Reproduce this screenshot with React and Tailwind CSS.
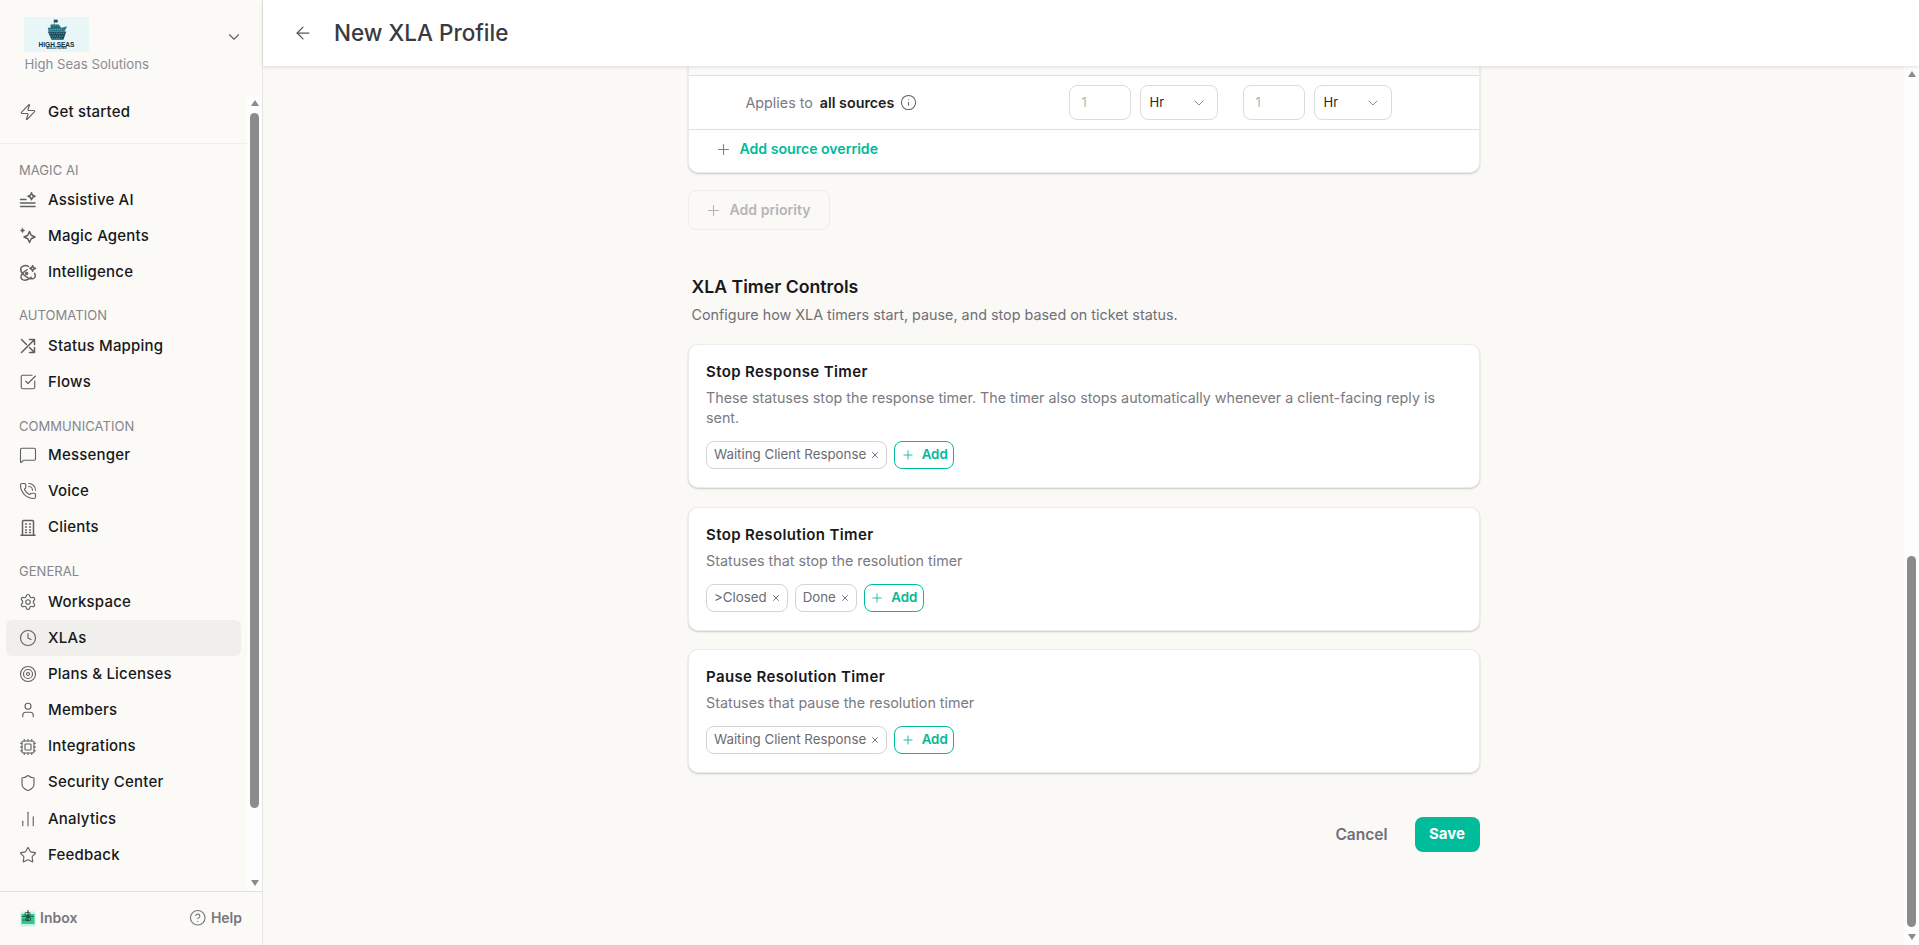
import React from "react";
import {
  Zap, SquareCheckBig, MessageSquare, PhoneCall, Settings, Clock, Target, User, Cpu, Shield,
  ChartNoAxesColumn, Star, CircleHelp, Plus, ChevronDown, ArrowLeft, Info, X,
} from "lucide-react";

const AssistiveIcon = (p) => (
  <svg viewBox="0 0 18 18" fill="none" stroke="currentColor" strokeWidth="1.2" strokeLinecap="round" strokeLinejoin="round" {...p}>
    <path d="M1.5 8.5h5.5M1.5 12h14.5M1.5 15.5h14.5" />
    <path d="M12.5 1.8l1.1 2.4 2.4 1.1-2.4 1.1-1.1 2.4-1.1-2.4-2.4-1.1 2.4-1.1z" />
  </svg>
);
const MagicIcon = (p) => (
  <svg viewBox="0 0 18 18" fill="none" stroke="currentColor" strokeWidth="1.2" strokeLinecap="round" strokeLinejoin="round" {...p}>
    <path d="M10.5 4.5l1.7 3.8 3.8 1.7-3.8 1.7-1.7 3.8-1.7-3.8L5 10l3.8-1.7z" />
    <path d="M3.5 1.2l.7 1.6 1.6.7-1.6.7-.7 1.6-.7-1.6-1.6-.7 1.6-.7z" fill="currentColor" strokeWidth="0.6" />
  </svg>
);
const IntelIcon = (p) => (
  <svg viewBox="0 0 18 18" fill="none" stroke="currentColor" strokeWidth="1.2" strokeLinecap="round" strokeLinejoin="round" {...p}>
    <path d="M9.5 2.4C7 1 3.5 1.4 2.2 3.6 1 5.8 2.4 8.6 5 11c2.8 2.5 6.6 4.4 9.2 3.6 2.2-.7 2.6-3 1.4-5.2" />
    <path d="M8 5.8C5.2 7.2 1.6 10.6 2 13.6c.4 2.4 3.4 3 6 2.2 1.6-.5 3-1.4 4.2-2.6" />
    <circle cx="7.6" cy="9.4" r="1" />
    <path d="M13.6 1.6l.9 1.9 1.9.9-1.9.9-.9 1.9-.9-1.9-1.9-.9 1.9-.9z" />
  </svg>
);
const CrossArrows = (p) => (
  <svg viewBox="0 0 18 18" fill="none" stroke="currentColor" strokeWidth="1.3" strokeLinecap="round" strokeLinejoin="round" {...p}>
    <path d="M2.5 2.500l5 5M10.500 10.500l5 5M2.500 15.500l13-13M10.500 2.500h5v5M15.500 10.500v5h-5" />
  </svg>
);
const BuildingIcon = (p) => (
  <svg viewBox="0 0 18 18" fill="none" stroke="currentColor" strokeWidth="1.2" strokeLinecap="round" strokeLinejoin="round" {...p}>
    <path d="M3.500 16V2.500a1 1 0 0 1 1-1h9a1 1 0 0 1 1 1V16M2 16.200h14" />
    <path d="M6.500 5h1M10.500 5h1M6.500 8h1M10.500 8h1M6.500 11h1M10.500 11h1M6.500 13.500h1M10.500 13.500h1" strokeWidth="1.400" />
  </svg>
);
const InboxIcon = (p) => (
  <svg viewBox="0 0 16 18" fill="none" {...p}>
    <rect x="0.5" y="2.5" width="15" height="15" rx="1.5" fill="#c9f2e4" />
    <rect x="1.5" y="5" width="13" height="10" fill="#2fc990" />
    <path d="M2 7.5h12M2 11h7" stroke="#1e6b52" strokeWidth="1" />
    <path d="M8 1v11" stroke="#1f3b36" strokeWidth="1" />
    <rect x="5" y="3.6" width="5" height="3" rx="0.5" stroke="#1f3b36" strokeWidth="0.8" />
    <rect x="6" y="8.6" width="4.5" height="3" rx="0.5" stroke="#1f3b36" strokeWidth="0.8" />
  </svg>
);
const ShipLogo = () => (
  <div className="w-[65px] h-[35px] bg-[#e9f6f8] flex flex-col items-center overflow-hidden">
    <svg viewBox="0 0 26 24" className="w-[24px] h-[23px] mt-[2px]">
      <path d="M10 0v6M10 0.500h3.500v2.500h-3.500z" fill="#1f4b58" stroke="#1f4b58" strokeWidth="0.5" />
      <path d="M6 5.500h9l3 4.500H6z" fill="#1f6272" />
      <path d="M3 9h15l6-1.500-3 5.500H4z" fill="#2b7585" />
      <path d="M3 13h20l-3 9H7z" fill="#1d4a58" />
      <path d="M4.500 15h17M5.500 18h15M7 20.500h11" stroke="#56b3b8" strokeWidth="0.9" strokeDasharray="1.500 1" />
      <path d="M7 7h9M5 11h14" stroke="#8fd0d2" strokeWidth="0.7" strokeDasharray="1 1" />
    </svg>
    <span className="text-[6.5px] leading-[5px] font-extrabold text-[#12303a] font-['Liberation_Sans',sans-serif] mt-[-0.5px]">HIGH SEAS</span>
    <span className="text-[3.5px] leading-[3px] font-bold text-[#12303a] font-['Liberation_Sans',sans-serif]">SOLUTIONS</span>
  </div>
);

const Item = ({ icon: I, label, active }) => (
  <div className={`h-[36.2px] mx-[6px] pl-[13px] flex items-center gap-[11px] rounded-[6px] ${active ? "bg-[#f0efeb]" : ""}`}>
    <I className="w-[18px] h-[18px] shrink-0 text-[#5f5f65]" strokeWidth={1.5} />
    <span className="text-[15px] font-medium text-[#18181b] tracking-[0.2px]">{label}</span>
  </div>
);
const Group = ({ title, className, gapClass, children }) => (
  <div className={className}>
    <div className="pl-[19px] h-[20px] flex items-center text-[13px] leading-none text-[#85858c] uppercase tracking-[0.05px]">{title}</div>
    <div className={gapClass}>{children}</div>
  </div>
);

const ScrollCol = ({ top, thumb, bottom }) => (
  <div className="w-[15px] shrink-0 bg-[#fdfdfd] flex flex-col items-center">
    <div className="w-0 h-0 border-x-[4.5px] border-x-transparent border-b-[6px] border-b-[#8b8b8b]" style={{ marginTop: top }} />
    <div className="w-[9px] bg-[#8b8b8b] rounded-full" style={{ marginTop: thumb[0], height: thumb[1] }} />
    <div className="w-0 h-0 border-x-[4.5px] border-x-transparent border-t-[6px] border-t-[#8b8b8b]" style={{ marginTop: bottom }} />
  </div>
);

const Tag = ({ label }) => (
  <div className="h-7 pl-[7px] pr-[6px] flex items-center gap-[4px] border border-[#d4d4d6] rounded-[8px] text-[13.3px] text-[#6b6b72]">
    <span>{label}</span>
    <X className="w-[10px] h-[10px]" strokeWidth={2.2} />
  </div>
);
const AddBtn = () => (
  <div className="h-7 w-[60px] flex items-center justify-center gap-[7px] border border-[#00bc9b] rounded-[8px] text-[13.3px] font-semibold text-[#00b99a]">
    <Plus className="w-[14px] h-[14px]" strokeWidth={1.5} />
    <span>Add</span>
  </div>
);
const TimerCard = ({ title, desc, tags, className }) => (
  <section className={`bg-white rounded-[10px] border border-[#ececea] shadow-[0_1px_2px_rgba(0,0,0,0.2)] pl-[17.5px] pr-[17px] pt-[17px] pb-[18px] ${className}`}>
    <h3 className="text-[15px] leading-5 font-semibold text-[#18181b] tracking-[0.38px]">{title}</h3>
    <p className="mt-[6px] text-[14.3px] leading-5 text-[#7a7a82]">{desc}</p>
    <div className="mt-[13px] flex gap-[7px]">
      {tags.map((t) => <Tag key={t} label={t} />)}
      <AddBtn />
    </div>
  </section>
);

const Num = () => (
  <div className="w-[62px] h-[35px] px-[12px] flex items-center border border-[#dcdcde] rounded-[8px] text-[13px] text-[#b4b4b8]">1</div>
);
const Sel = () => (
  <div className="w-[78px] h-[35px] pl-[9px] pr-[10px] flex items-center justify-between border border-[#dcdcde] rounded-[8px] text-[13px] text-[#27272a]">
    <span>Hr</span>
    <ChevronDown className="w-[16px] h-[16px] text-[#8a8a90]" strokeWidth={1.5} />
  </div>
);

export default function App() {
  return (
    <div className="flex w-screen h-screen overflow-hidden font-['Inter',sans-serif] bg-[#faf9f6]">
      <aside className="w-[263px] shrink-0 h-full flex flex-col bg-[#fbfaf7] border-r border-[#e6e5e2]">
        <div className="h-[96px] shrink-0 relative pl-[24px] pt-[17px]">
          <ShipLogo />
          <div className="mt-[2px] ml-[0.5px] text-[13.2px] leading-[20px] text-[#8b8d94]">High Seas Solutions</div>
          <ChevronDown className="absolute left-[225px] top-[28px] w-[18px] h-[18px] text-[#5f5f66]" strokeWidth={1.5} />
        </div>
        <div className="flex-1 flex min-h-0">
          <nav className="flex-1 min-w-0">
            <div className="mt-[-2px]"><Item icon={Zap} label="Get started" /></div>
            <div className="h-px bg-[#efeeea] mt-[13px]" />
            <Group title="Magic AI" className="mt-[16px]" gapClass="mt-[2px]">
              <Item icon={AssistiveIcon} label="Assistive AI" />
              <Item icon={MagicIcon} label="Magic Agents" />
              <Item icon={IntelIcon} label="Intelligence" />
            </Group>
            <Group title="Automation" className="mt-[15px]" gapClass="mt-[2px]">
              <Item icon={CrossArrows} label="Status Mapping" />
              <Item icon={SquareCheckBig} label="Flows" />
            </Group>
            <Group title="Communication" className="mt-[16px]" gapClass="mt-[1px]">
              <Item icon={MessageSquare} label="Messenger" />
              <Item icon={PhoneCall} label="Voice" />
              <Item icon={BuildingIcon} label="Clients" />
            </Group>
            <Group title="General" className="mt-[16px]" gapClass="mt-[2px]">
              <Item icon={Settings} label="Workspace" />
              <Item icon={Clock} label="XLAs" active />
              <Item icon={Target} label="Plans & Licenses" />
              <Item icon={User} label="Members" />
              <Item icon={Cpu} label="Integrations" />
              <Item icon={Shield} label="Security Center" />
              <Item icon={ChartNoAxesColumn} label="Analytics" />
              <Item icon={Star} label="Feedback" />
            </Group>
          </nav>
          <ScrollCol top="4px" thumb={["7px", "695px"]} bottom="72px" />
        </div>
        <div className="h-[54px] shrink-0 border-t border-[#e2e1de] flex items-center justify-between px-[20px] pb-[2px]">
          <div className="flex items-center gap-[4px] text-[14px] font-semibold text-[#77777e]">
            <InboxIcon className="w-[16px] h-[18px]" />
            <span>Inbox</span>
          </div>
          <div className="flex items-center gap-[4px] text-[14px] font-semibold text-[#77777e]">
            <CircleHelp className="w-[17.5px] h-[17.5px]" strokeWidth={1.5} />
            <span>Help</span>
          </div>
        </div>
      </aside>

      <div className="flex-1 min-w-0 flex flex-col">
        <header className="relative z-10 h-[66px] shrink-0 bg-white shadow-[0_1px_4px_rgba(0,0,0,0.12)] flex items-center pl-[30px] gap-[21px]">
          <ArrowLeft className="w-[20px] h-[20px] text-[#55555c]" strokeWidth={1.5} />
          <h1 className="text-[22.5px] font-medium text-[#3a3a40]">New XLA Profile</h1>
        </header>
        <div className="flex-1 flex min-h-0">
          <main className="flex-1 min-w-0 flex justify-center overflow-hidden">
            <div className="w-[792px]">
              <section className="bg-white rounded-b-[10px] border border-t-0 border-[#ececea] shadow-[0_1px_2px_rgba(0,0,0,0.2)]">
                <div className="h-[10px] bg-[#fafafa] border-b border-[#dededd]" />
                <div className="h-[54px] border-b border-[#e0e0df] flex items-center pl-[57px]">
                  <div className="w-[323px] flex items-center">
                    <span className="text-[14.3px] text-[#7a7a82]">Applies to</span>
                    <span className="ml-[7px] text-[14.3px] font-semibold text-[#1f1f23]">all sources</span>
                    <Info className="ml-[6px] w-[17px] h-[17px] text-[#5f5f65]" strokeWidth={1.5} />
                  </div>
                  <div className="flex items-center gap-[9px]"><Num /><Sel /></div>
                  <div className="ml-[25px] flex items-center gap-[9px]"><Num /><Sel /></div>
                </div>
                <div className="h-[42px] pb-[4px] flex items-center pl-[26px] gap-[8px] text-[14.1px] font-semibold text-[#00b99a]">
                  <Plus className="w-[17px] h-[17px]" strokeWidth={1.5} />
                  <span>Add source override</span>
                </div>
              </section>
              <div className="mt-[17px] w-[142px] h-[40px] rounded-[8px] border border-[#ececea] flex items-center pl-[16px] gap-[8px] text-[14.1px] font-semibold text-[#b5b5b8]">
                <Plus className="w-[17px] h-[17px]" strokeWidth={1.5} />
                <span>Add priority</span>
              </div>
              <h2 className="mt-[45px] ml-[4px] text-[17.7px] leading-6 font-semibold text-[#18181b]">XLA Timer Controls</h2>
              <p className="mt-[6px] ml-[4px] text-[14.35px] leading-5 text-[#6f6f77]">Configure how XLA timers start, pause, and stop based on ticket status.</p>
              <TimerCard
                className="mt-[19px]"
                title="Stop Response Timer"
                desc="These statuses stop the response timer. The timer also stops automatically whenever a client-facing reply is sent."
                tags={["Waiting Client Response"]}
              />
              <TimerCard
                className="mt-[19px]"
                title="Stop Resolution Timer"
                desc="Statuses that stop the resolution timer"
                tags={[">Closed", "Done"]}
              />
              <TimerCard
                className="mt-[18px]"
                title="Pause Resolution Timer"
                desc="Statuses that pause the resolution timer"
                tags={["Waiting Client Response"]}
              />
              <div className="mt-[44px] flex items-center justify-end gap-[27px]">
                <span className="text-[15.5px] font-semibold text-[#6f6f7a]">Cancel</span>
                <div className="w-[65px] h-[35px] rounded-[8px] bg-[#00bc9b] flex items-center justify-center text-[15px] font-bold text-white">Save</div>
              </div>
            </div>
          </main>
          <ScrollCol top="5px" thumb={["479px", "371px"]} bottom="7px" />
        </div>
      </div>
    </div>
  );
}
